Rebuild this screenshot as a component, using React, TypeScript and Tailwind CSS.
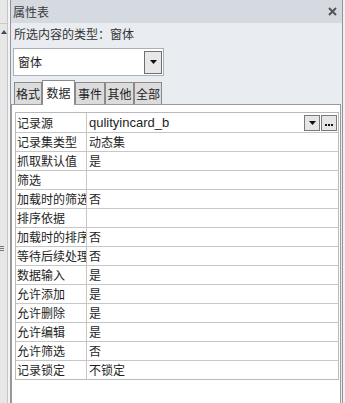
const font = { fontFamily: '"Noto Sans CJK SC", "Liberation Sans", sans-serif' };

type Row = { label: string; value: string; source?: boolean };

const rows: Row[] = [
  { label: "记录源", value: "qulityincard_b", source: true },
  { label: "记录集类型", value: "动态集" },
  { label: "抓取默认值", value: "是" },
  { label: "筛选", value: "" },
  { label: "加载时的筛选", value: "否" },
  { label: "排序依据", value: "" },
  { label: "加载时的排序", value: "否" },
  { label: "等待后续处理", value: "否" },
  { label: "数据输入", value: "是" },
  { label: "允许添加", value: "是" },
  { label: "允许删除", value: "是" },
  { label: "允许编辑", value: "是" },
  { label: "允许筛选", value: "否" },
  { label: "记录锁定", value: "不锁定" },
];

const tabs = [
  { name: "格式", w: "w-[28px]" },
  { name: "数据", w: "w-[33px]", active: true },
  { name: "事件", w: "w-[30px]" },
  { name: "其他", w: "w-[29px]" },
  { name: "全部", w: "w-[28px]" },
];

function DownTriangle() {
  return (
    <svg width="7" height="4" viewBox="0 0 7 4">
      <path d="M0 0H7L3.5 4Z" fill="#111" />
    </svg>
  );
}

export default function App() {
  return (
    <div className="w-[345px] h-[403px] flex bg-[#f0f0f0] overflow-hidden text-[#1e1e1e]" style={font}>
      {/* docked strip on the left */}
      <div className="w-[8px] h-full bg-[#e7e7e7] border-r border-[#c6c6c6] flex flex-col">
        <div className="h-[24px] border-b border-[#c9c9c9]" />
        <div className="mt-[6px] ml-[1px]">
          <svg width="6" height="4" viewBox="0 0 6 4">
            <path d="M0 4H6L3 0Z" fill="#4a4a4a" />
          </svg>
        </div>
        <div className="mt-[212px] flex flex-col gap-[1px] w-[4px]">
          <div className="h-px bg-[#777]" />
          <div className="h-px bg-[#777]" />
          <div className="h-px bg-[#777]" />
        </div>
      </div>
      <div className="w-[2px] h-full bg-[#f4f4f4]" />

      {/* property sheet panel */}
      <div className="w-[333px] h-full flex flex-col bg-[#e9ecf0] border-x border-[#8e959e]">
        <div className="h-[23px] shrink-0 bg-[#d5dae1] flex items-center justify-between pl-[2px] pr-[5px]">
          <span className="text-[12px] leading-none text-[#3b3b3b]">属性表</span>
          <svg width="9" height="9" viewBox="0 0 9 9">
            <path d="M1 1L8 8M8 1L1 8" stroke="#555" strokeWidth="2" />
          </svg>
        </div>
        <div className="h-[21px] shrink-0 flex items-center pl-[3px] text-[12px] leading-none text-[#333]">
          所选内容的类型：窗体
        </div>

        <div className="ml-[2px] mt-[4px] w-[151px] h-[28px] shrink-0 bg-white border border-[#aab0b8] flex items-center justify-between pl-[4px] pr-[1px]">
          <span className="text-[12px] leading-none">窗体</span>
          <div className="w-[18px] h-[23px] border border-[#6f6f6f] bg-[#e8e8e8] flex items-center justify-center">
            <DownTriangle />
          </div>
        </div>

        <div className="ml-[3px] mt-[3px] h-[25px] shrink-0 flex items-end relative z-10">
          {tabs.map((t) =>
            t.active ? (
              <div
                key={t.name}
                className={`${t.w} h-[25px] bg-white border-x border-t border-[#8a8a8a] flex items-center justify-center text-[12px] leading-none -mb-px pb-[1px]`}
              >
                {t.name}
              </div>
            ) : (
              <div
                key={t.name}
                className={`${t.w} h-[22px] bg-[#dcdcdc] border-x border-t border-[#8a8a8a] flex items-center justify-center text-[12px] leading-none`}
              >
                {t.name}
              </div>
            )
          )}
        </div>

        <div className="flex-1 mr-[1px] bg-white border-l border-r border-t border-[#9a9a9a] pt-[7px] pl-[3px] pr-[1px]">
          <div className="border border-[#b9b9b9]">
            {rows.map((r, i) => (
              <div key={r.label} className={`h-[19px] flex ${i > 0 ? "border-t border-[#c6c6c6]" : ""}`}>
                <div className="w-[71px] shrink-0 border-r border-[#c6c6c6] pl-[1px] overflow-hidden whitespace-nowrap flex items-center text-[12px] leading-none">
                  {r.label}
                </div>
                {r.source ? (
                  <div className="flex-1 flex items-center justify-between pl-[2px] pr-[1px]">
                    <span className="text-[13px] leading-none" style={{ fontFamily: '"Liberation Sans", sans-serif' }}>
                      {r.value}
                    </span>
                    <div className="flex gap-[1px]">
                      <div className="w-[16px] h-[16px] border border-[#7a7a7a] bg-[#e6e6e6] flex items-center justify-center">
                        <DownTriangle />
                      </div>
                      <div className="w-[16px] h-[16px] border border-[#7a7a7a] bg-[#e6e6e6] flex items-end justify-center pb-[4px]">
                        <svg width="8" height="2" viewBox="0 0 8 2">
                          <rect x="0" y="0" width="2" height="2" fill="#111" />
                          <rect x="3" y="0" width="2" height="2" fill="#111" />
                          <rect x="6" y="0" width="2" height="2" fill="#111" />
                        </svg>
                      </div>
                    </div>
                  </div>
                ) : (
                  <div className="flex-1 flex items-center pl-[2px] text-[12px] leading-none">{r.value}</div>
                )}
              </div>
            ))}
          </div>
        </div>
      </div>
      <div className="flex-1 h-full bg-[#f0f0f0]" />
    </div>
  );
}
